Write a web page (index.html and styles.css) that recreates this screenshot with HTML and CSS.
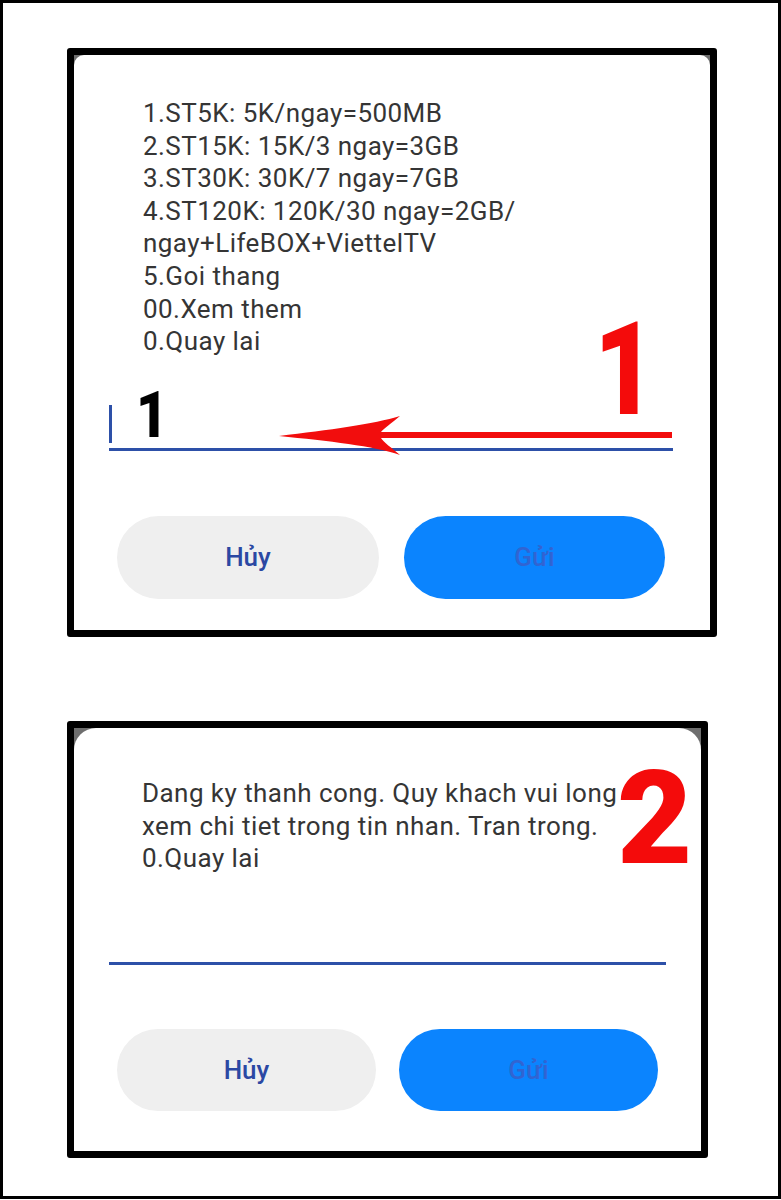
FILE: index.html
```html
<!DOCTYPE html>
<html lang="vi">
<head>
<meta charset="utf-8">
<title>USSD</title>
<link rel="stylesheet" href="styles.css">
</head>
<body>
<div class="frame">
  <div class="panel panel-1">
    <div class="screen">
      <div class="msg">1.ST5K: 5K/ngay=500MB<br>2.ST15K: 15K/3 ngay=3GB<br>3.ST30K: 30K/7 ngay=7GB<br>4.ST120K: 120K/30 ngay=2GB/<br>ngay+LifeBOX+ViettelTV<br>5.Goi thang<br>00.Xem them<br>0.Quay lai</div>
      <div class="input"><span class="caret"></span><span class="typed">1</span></div>
      <div class="actions"><button class="btn btn-cancel">Hủy</button><button class="btn btn-send">Gửi</button></div>
      <svg class="arrow" viewBox="0 0 636 575" width="636" height="575">
        <path d="M205,381 C255,375 300,369 326,361 C318,368 309,374 307,377 L598,377 L598,383 L307,383 C309,387 318,393 326,400 C300,391 255,386 205,381 Z" fill="#f20d0d"/>
      </svg>
      <span class="mark mark-1">1</span>
    </div>
  </div>
  <div class="panel panel-2">
    <div class="screen">
      <div class="msg">Dang ky thanh cong. Quy khach vui long<br>xem chi tiet trong tin nhan. Tran trong.<br>0.Quay lai</div>
      <div class="input"></div>
      <div class="actions"><button class="btn btn-cancel">Hủy</button><button class="btn btn-send">Gửi</button></div>
      <span class="mark mark-2">2</span>
    </div>
  </div>
</div>
</body>
</html>
```

FILE: styles.css
```css
* { box-sizing: border-box; }
html, body { margin: 0; padding: 0; background: #fff; }
body { font-family: Roboto, "Noto Sans", sans-serif; }

.frame {
  width: 781px;
  height: 1199px;
  border: 3px solid #000;
  padding: 45px 0 0 64px;
}

.panel {
  border: 7px solid #000;
  border-radius: 3px;
  background: #6e6e6e;
}
.panel-1 { width: 650px; height: 589px; }
.panel-2 { width: 641px; height: 437px; margin-top: 84px; }

.screen {
  position: relative;
  height: 100%;
  background: #fff;
}
.panel-1 .screen { border-radius: 10px 10px 0 0; }
.panel-2 .screen { border-radius: 22px 22px 0 0; }

.msg {
  color: #353535;
  font-size: 26px;
  line-height: 32.6px;
  letter-spacing: 0.45px;
  white-space: nowrap;
}
.panel-1 .msg { padding: 42px 0 0 69px; }
.panel-2 .msg { padding: 49px 0 0 68px; }

.input {
  display: flex;
  align-items: flex-end;
  height: 67px;
  border-bottom: 3px solid #2d50a8;
}
.panel-1 .input { margin: 26px 37px 0 35px; }
.panel-2 .input { margin: 23px 35px 0 35px; }

.caret {
  width: 3px;
  height: 38px;
  margin-bottom: 5px;
  background: #2d50a8;
}
.typed {
  display: inline-block;
  margin-left: 24px;
  font-family: Roboto, sans-serif;
  font-weight: 900;
  font-size: 64px;
  line-height: 64px;
  color: #000;
  transform: scaleX(0.86);
  transform-origin: left center;
}

.actions {
  display: flex;
}
.panel-1 .actions { margin: 65px 0 0 43px; gap: 25px; }
.panel-2 .actions { margin: 64px 0 0 43px; gap: 23px; }

.btn {
  border: none;
  border-radius: 999px;
  font-family: Roboto, sans-serif;
  font-weight: 500;
  font-size: 26px;
  padding: 0;
}
.panel-1 .btn { height: 83px; }
.panel-1 .btn-cancel { width: 262px; }
.panel-1 .btn-send { width: 261px; }
.panel-2 .btn { height: 82px; width: 259px; }

.btn-cancel { background: #efefef; color: #2b48a3; }
.btn-send { background: #0b84fe; color: #3164d2; }

.arrow {
  position: absolute;
  left: 0;
  top: 0;
  pointer-events: none;
}

.mark {
  position: absolute;
  font-family: Roboto, sans-serif;
  font-weight: 900;
  font-size: 130px;
  line-height: 130px;
  color: #f40b0b;
  transform-origin: left center;
}
.mark-1 { left: 520px; top: 250px; transform: scaleX(0.82); }
.mark-2 { left: 543px; top: 26px; }
```
